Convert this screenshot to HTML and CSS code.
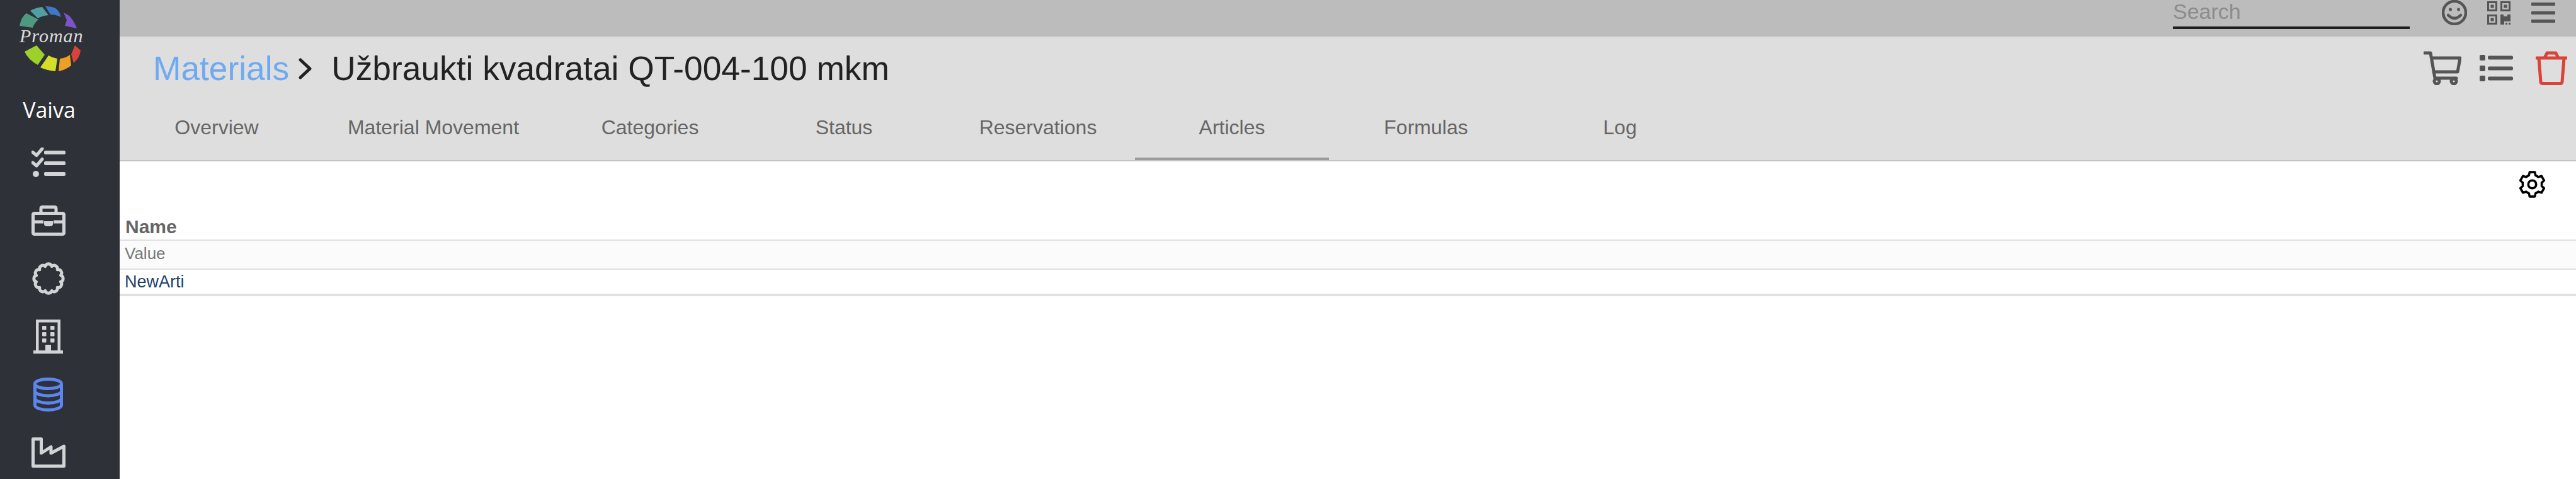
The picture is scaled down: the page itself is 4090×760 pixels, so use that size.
FILE: index.html
```html
<!DOCTYPE html>
<html lang="en">
<head>
<meta charset="utf-8">
<title>Materials</title>
<link rel="stylesheet" href="styles.css">
</head>
<body>
<aside class="sidebar">
  <svg class="logo" viewBox="0 0 153 130" width="153" height="130">
    <path class="s1" d="M31 41Q34 26 42 21L61 31Q54 37 52 44Z"/>
    <path class="s2" d="M48 17Q57 12 67 11L77 24Q67 25 60 29Z"/>
    <path class="s3" d="M72 10Q82 10 88 13Q94 17 97 27Q88 23 80 23Z"/>
    <path class="s4" d="M101 20L110 25Q118 34 122 45L103 41L106 32Z"/>
    <path class="s5" d="M119 72L128 80Q127 91 117 100L113 86Z"/>
    <path class="s6" d="M111 87L113 104Q104 111 93 113L95 93Q105 92 111 87Z"/>
    <path class="s7" d="M77 88Q84 92 91 93L88 113Q75 112 64 107Z"/>
    <path class="s8" d="M58 72L71 87L60 103Q45 95 39 82Z"/>
    <text class="logo-text" x="31" y="67">Proman</text>
  </svg>
  <div class="user">Vaiva</div>
  <nav class="nav">
    <a class="nav-item">
      <svg viewBox="0 0 54 48" width="54" height="48" class="ico-fill">
        <path class="ico-line" d="M2 7.500L8 12.500L17 2M2 24L8 29L17 18.500"/>
        <rect x="20" y="5" width="34" height="6" rx="2"/><rect x="20" y="22" width="34" height="6" rx="2"/><rect x="20" y="39" width="34" height="6" rx="2"/>
        <circle cx="7" cy="42" r="5"/>
      </svg>
    </a>
    <a class="nav-item">
      <svg viewBox="0 0 54 48" width="54" height="48" class="ico-stroke">
        <rect x="2.500" y="12.500" width="49" height="33" rx="2"/>
        <path d="M15 12V5Q15 2.500 17.500 2.500H36.500Q39 2.500 39 5V12M2.500 26H19M35 26H51.500"/>
        <path class="ico-solid" d="M20 25H34V29Q34 33 30 33H24Q20 33 20 29Z"/>
      </svg>
    </a>
    <a class="nav-item">
      <svg viewBox="0 0 50 50" width="54" height="54" class="ico-stroke ico-thin">
        <path d="M42.900 29.800A5 5 0 0 1 38.100 38.100A5 5 0 0 1 29.800 42.900A5 5 0 0 1 20.200 42.900A5 5 0 0 1 11.900 38.100A5 5 0 0 1 7.100 29.800A5 5 0 0 1 7.100 20.200A5 5 0 0 1 11.900 11.900A5 5 0 0 1 20.200 7.100A5 5 0 0 1 29.800 7.100A5 5 0 0 1 38.100 11.900A5 5 0 0 1 42.900 20.200A5 5 0 0 1 42.900 29.800Z"/>
      </svg>
    </a>
    <a class="nav-item">
      <svg viewBox="0 0 47 54" width="47" height="54" class="ico-fill">
        <path d="M4 0H43V49H47V54H0V49H4ZM8.500 4.500V49H19V40H28V49H38.500V4.500Z" fill-rule="evenodd"/>
        <rect x="14" y="10" width="6.500" height="6.500" rx="1"/><rect x="27" y="10" width="6.500" height="6.500" rx="1"/>
        <rect x="14" y="20" width="6.500" height="6.500" rx="1"/><rect x="27" y="20" width="6.500" height="6.500" rx="1"/>
        <rect x="14" y="30" width="6.500" height="6.500" rx="1"/><rect x="27" y="30" width="6.500" height="6.500" rx="1"/>
      </svg>
    </a>
    <a class="nav-item">
      <svg viewBox="0 0 47 54" width="47" height="54" class="ico-stroke ico-active">
        <ellipse cx="23.500" cy="10" rx="21" ry="7.500"/>
        <path d="M2.500 10V44C2.500 48 12 51.500 23.500 51.500S44.500 48 44.500 44V10M2.500 21.500C2.500 25.500 12 29 23.500 29S44.500 25.500 44.500 21.500M2.500 33C2.500 37 12 40.500 23.500 40.500S44.500 37 44.500 33"/>
      </svg>
    </a>
    <a class="nav-item">
      <svg viewBox="0 0 54 48" width="54" height="48" class="ico-stroke">
        <path d="M2.500 2.500H15.500V25L31 15V25L51.500 14V45.500H2.500Z"/>
      </svg>
    </a>
  </nav>
</aside>
<div class="main">
  <div class="topbar">
    <div class="search">Search</div>
    <svg class="top-ico smile" viewBox="0 0 40 40" width="40" height="40">
      <circle cx="20" cy="20" r="18" class="line"/>
      <circle cx="13.500" cy="15" r="2.500" class="dot"/><circle cx="26.500" cy="15" r="2.500" class="dot"/>
      <path d="M10 24Q20 34 30 24" class="line"/>
    </svg>
    <svg class="top-ico qr" viewBox="0 0 37 37" width="37" height="37">
      <path class="dot" fill-rule="evenodd" d="M0 0H16V16H0ZM3 3V13H13V3ZM5.500 5.500H10.500V10.500H5.500ZM21 0H37V16H21ZM24 3V13H34V3ZM26.500 5.500H31.500V10.500H26.500ZM0 21H16V37H0ZM3 24V34H13V24ZM5.500 26.500H10.500V31.500H5.500ZM21 21H26V24H32V21H37V32H27V37H21ZM29 34H32V37H29ZM34 34H37V37H34Z"/>
    </svg>
    <div class="burger"><span></span><span></span><span></span></div>
  </div>
  <header class="head">
    <div class="title-row">
      <h1 class="title"><a class="crumb">Materials</a>
        <svg class="chev" viewBox="0 0 24 34" width="24" height="34"><path d="M5 3L20 17L5 31"/></svg>
        <span>Užbraukti kvadratai QT-004-100 mkm</span></h1>
      <div class="actions">
        <svg class="act cart" viewBox="0 0 60 54" width="60" height="54">
          <path class="line line-bold" d="M1 3H11L18 43H52M13 11H58L54 33H16"/>
          <circle cx="21" cy="48" r="4" class="line line-bold"/><circle cx="48" cy="48" r="4" class="line line-bold"/>
        </svg>
        <svg class="act list" viewBox="0 0 53 42" width="53" height="42">
          <rect x="0" y="0" width="9" height="9" rx="2" class="dot"/><rect x="13" y="1.500" width="40" height="6" rx="2" class="dot"/>
          <rect x="0" y="17" width="9" height="9" rx="2" class="dot"/><rect x="13" y="18.500" width="40" height="6" rx="2" class="dot"/>
          <rect x="0" y="33" width="9" height="9" rx="2" class="dot"/><rect x="13" y="34.500" width="40" height="6" rx="2" class="dot"/>
        </svg>
        <svg class="act trash" viewBox="0 0 50 54" width="50" height="54">
          <path d="M1 11H49M5 11L8 49Q8.500 51.500 11 51.500H39Q41.500 51.500 42 49L45 11M14 11L18 3H32L36 11"/>
        </svg>
      </div>
    </div>
    <div class="tabs">
      <a class="tab">Overview</a>
      <a class="tab tab-wide">Material Movement</a>
      <a class="tab">Categories</a>
      <a class="tab">Status</a>
      <a class="tab">Reservations</a>
      <a class="tab tab-active">Articles</a>
      <a class="tab">Formulas</a>
      <a class="tab">Log</a>
    </div>
  </header>
  <section class="content">
    <div class="toolbar">
      <svg class="gear" viewBox="0 0 24 24" width="43" height="43">
        <path d="M9.100 4L9.700 1.200H14.300L14.900 4L17.500 5.500L20.200 4.600L22.500 8.600L20.400 10.500V13.500L22.500 15.400L20.200 19.400L17.500 18.500L14.900 20L14.300 22.800H9.700L9.100 20L6.500 18.500L3.800 19.400L1.500 15.400L3.600 13.500V10.500L1.500 8.600L3.800 4.600L6.500 5.500Z"/>
        <circle cx="12" cy="12" r="3.500"/>
      </svg>
    </div>
    <div class="th">Name</div>
    <div class="row row-filter">Value</div>
    <div class="row row-data">NewArti</div>
  </section>
</div>
</body>
</html>
```

FILE: styles.css
```css
* { box-sizing: border-box; }
html, body { margin: 0; height: 760px; overflow: hidden; background: #fff; }
body { display: flex; font-family: "Liberation Sans", Arial, sans-serif; }

.sidebar { width: 190px; flex: none; background: #2e3138; overflow: hidden; }
.logo { display: block; }
.s1 { fill: #4d9a80; } .s2 { fill: #4f9fa3; } .s3 { fill: #3f78c9; } .s4 { fill: #7a55c8; }
.s5 { fill: #d9443a; } .s6 { fill: #eba122; } .s7 { fill: #d6dc2a; } .s8 { fill: #9ed02c; }
.logo-text { font: italic 30px "Liberation Serif", serif; fill: #dcdcdc; letter-spacing: 1px; }
.user { width: 156px; margin-top: 24px; text-align: center; color: #fff; font: 500 34px/40px "Open Sans", sans-serif; }
.nav { width: 153px; margin-top: 18px; display: flex; flex-direction: column; }
.nav-item { height: 92px; display: flex; align-items: center; justify-content: center; }
.ico-fill { fill: #d2d3d5; }
.ico-line { fill: none; stroke: #d2d3d5; stroke-width: 5; stroke-linecap: round; stroke-linejoin: round; }
.ico-stroke { fill: none; stroke: #d2d3d5; stroke-width: 5; stroke-linejoin: round; }
.ico-thin { stroke-width: 4.500; }
.ico-solid { fill: #d2d3d5; stroke: none; }
.ico-active { stroke: #5b86f0; }

.main { flex: 1; min-width: 0; display: flex; flex-direction: column; }
.topbar { height: 58px; background: #bcbcbc; display: flex; align-items: flex-start; }
.search { margin-left: 3260px; width: 376px; height: 46px; border-bottom: 4px solid #1e1e1e; color: #8c8c8c; font-size: 34px; line-height: 36px; }
.top-ico { display: block; flex: none; }
.smile { margin-left: 51px; }
.qr { margin-left: 32px; margin-top: 2px; }
.line { fill: none; stroke: #555; stroke-width: 4.500; stroke-linecap: round; stroke-linejoin: round; }
.line-bold { stroke-width: 5; }
.dot { fill: #555; }
.burger { margin-left: 33px; margin-top: 4px; width: 38px; height: 32px; display: flex; flex-direction: column; justify-content: space-between; }
.burger span { display: block; height: 5px; background: #555; border-radius: 1px; }

.head { height: 198px; background: #dedede; border-bottom: 2px solid #c4c4c4; display: flex; flex-direction: column; }
.title-row { height: 102px; display: flex; align-items: flex-start; justify-content: space-between; padding: 23px 14px 0 53px; }
.title { margin: 0; display: flex; align-items: center; gap: 13px; font-size: 53.300px; line-height: 56px; font-weight: 400; color: #222; white-space: nowrap; }
.crumb { color: #6eaaf2; }
.chev { fill: none; stroke: #222; stroke-width: 5; stroke-linecap: round; stroke-linejoin: round; margin-right: 17px; }
.actions { display: flex; align-items: center; gap: 29px; }
.act { display: block; }
.trash { fill: none; stroke: #d9443a; stroke-width: 5; stroke-linecap: round; stroke-linejoin: round; margin-left: 7px; }
.tabs { flex: 1; display: flex; }
.tab { width: 308px; display: flex; align-items: center; justify-content: center; font-size: 32px; color: #666; padding-bottom: 6px; border-bottom: 4px solid transparent; }
.tab-wide { width: 380px; }
.tab-active { border-bottom-color: #9b9b9b; }

.content { flex: 1; }
.toolbar { height: 84px; display: flex; justify-content: flex-end; padding: 15px 48px 0 0; }
.gear { display: block; fill: none; stroke: #000; stroke-width: 2; stroke-linejoin: round; }
.th { height: 40px; padding-left: 9px; font-size: 30px; line-height: 40px; font-weight: 700; color: #666; }
.row { border-top: 2px solid #e0e0e0; font-size: 26px; }
.row-filter { height: 46px; background: #fbfbfb; color: #777; padding-left: 8px; line-height: 40px; }
.row-data { height: 44px; color: #1f3f68; padding-left: 8px; line-height: 38px; font-size: 27px; border-bottom: 4px solid #e0e0e0; }
```
